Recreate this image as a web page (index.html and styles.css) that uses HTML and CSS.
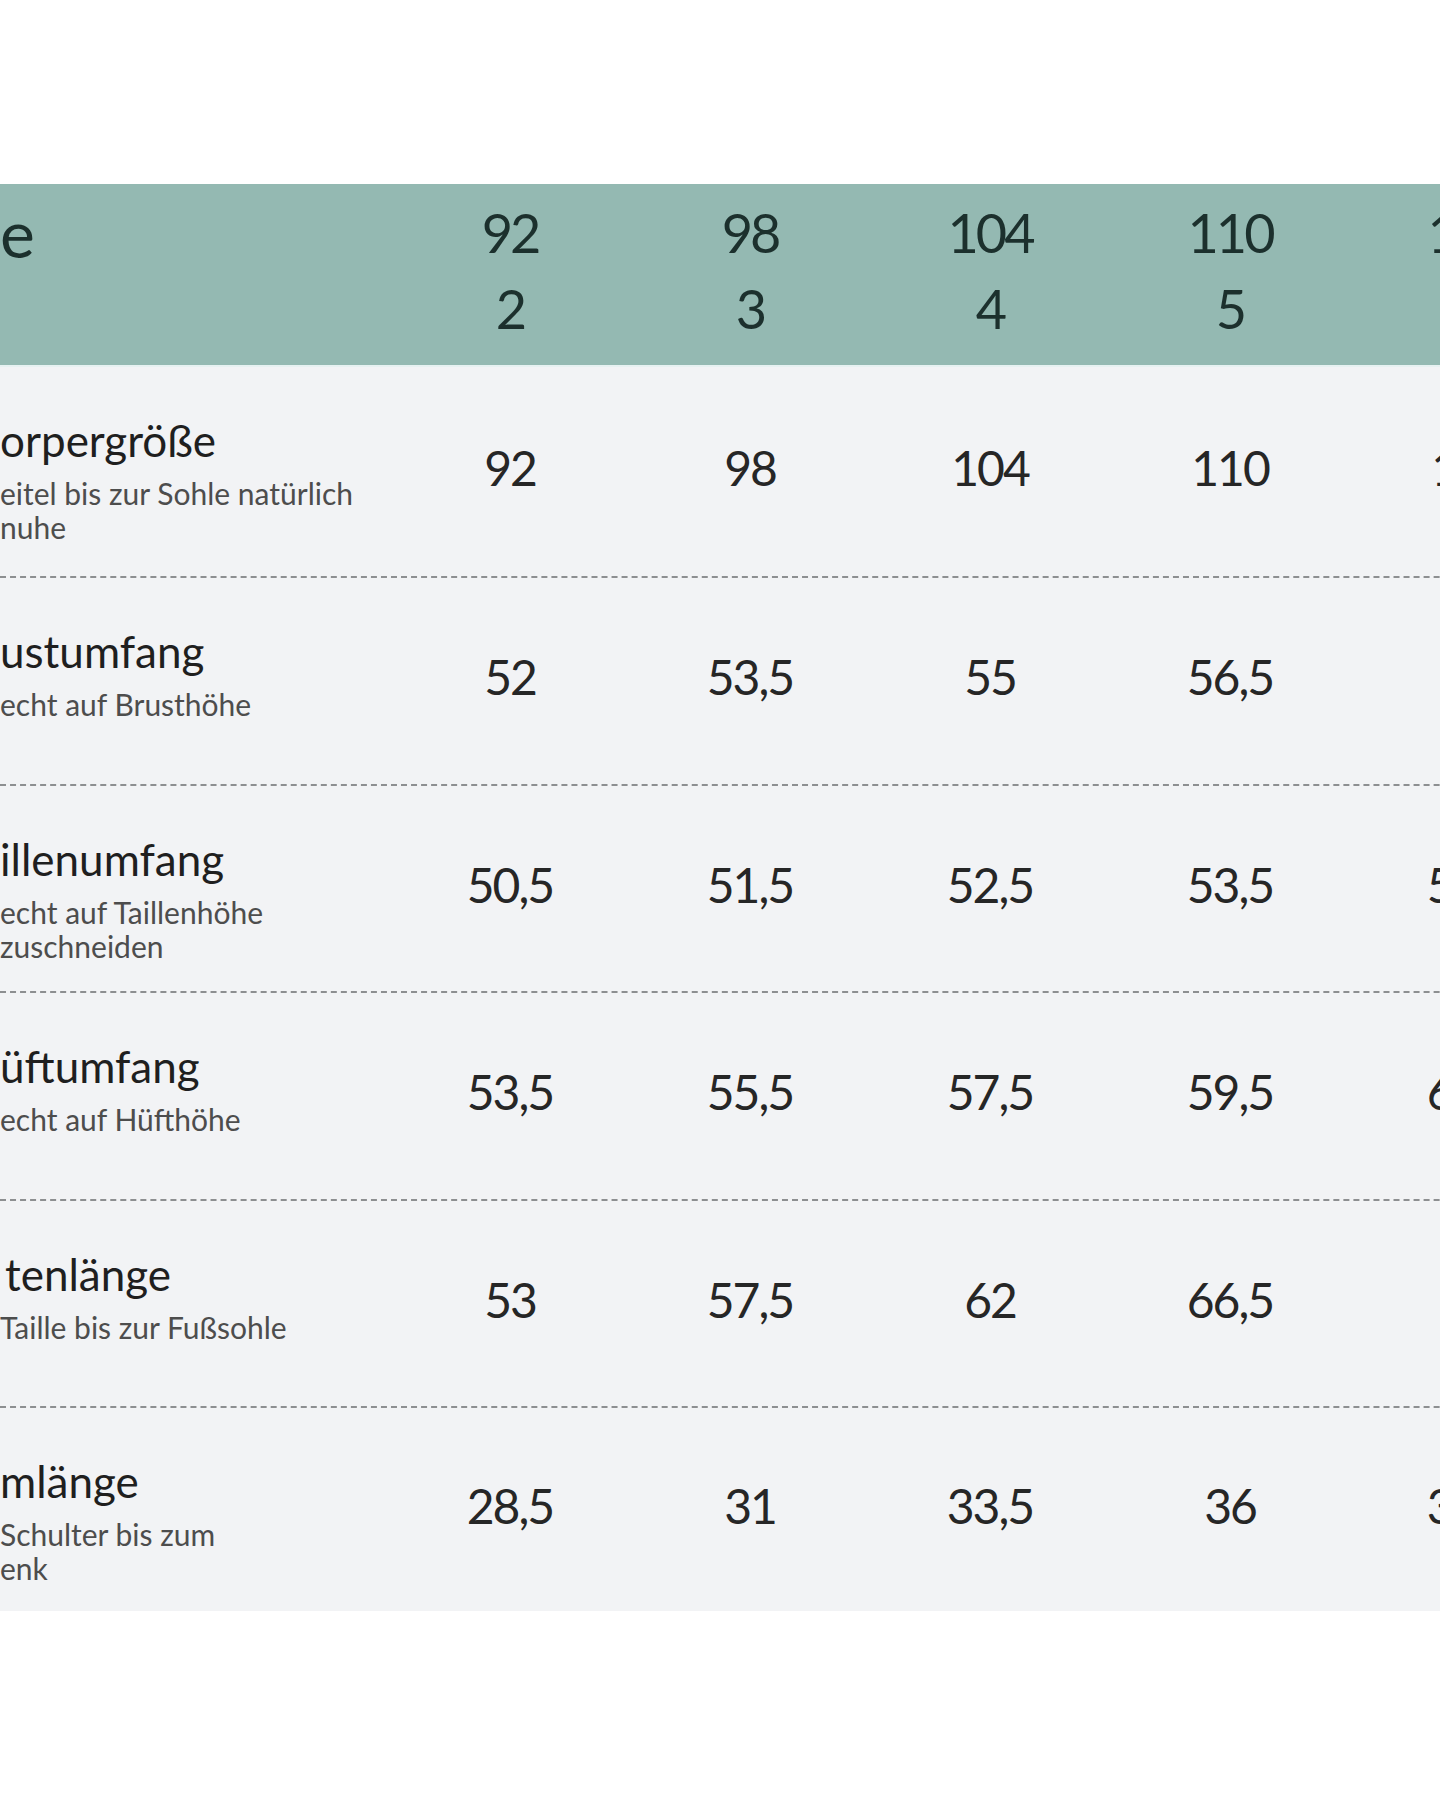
FILE: index.html
```html
<!DOCTYPE html>
<html lang="de">
<head>
<meta charset="utf-8">
<title>Größentabelle</title>
<link rel="stylesheet" href="styles.css">
</head>
<body>
<main class="sheet">
  <section class="chart">
    <div class="head">
      <div class="head-label"><span>e</span><span>&nbsp;</span></div>
      <div class="head-cell"><span>92</span><span>2</span></div>
      <div class="head-cell"><span>98</span><span>3</span></div>
      <div class="head-cell"><span>104</span><span>4</span></div>
      <div class="head-cell"><span>110</span><span>5</span></div>
      <div class="head-cell"><span>116</span><span>6</span></div>
    </div>

    <div class="row">
      <div class="label"><div class="title">orpergröße</div><div class="desc">eitel bis zur Sohle natürlich<br>nuhe</div></div>
      <div class="val">92</div><div class="val">98</div><div class="val">104</div><div class="val">110</div><div class="val">116</div>
    </div>
    <div class="row">
      <div class="label"><div class="title">ustumfang</div><div class="desc">echt auf Brusthöhe</div></div>
      <div class="val">52</div><div class="val">53,5</div><div class="val">55</div><div class="val">56,5</div><div class="val">58</div>
    </div>
    <div class="row">
      <div class="label"><div class="title">illenumfang</div><div class="desc">echt auf Taillenhöhe<br>zuschneiden</div></div>
      <div class="val">50,5</div><div class="val">51,5</div><div class="val">52,5</div><div class="val">53,5</div><div class="val">54,5</div>
    </div>
    <div class="row">
      <div class="label"><div class="title">üftumfang</div><div class="desc">echt auf Hüfthöhe</div></div>
      <div class="val">53,5</div><div class="val">55,5</div><div class="val">57,5</div><div class="val">59,5</div><div class="val">61,5</div>
    </div>
    <div class="row">
      <div class="label"><div class="title indent">tenlänge</div><div class="desc">Taille bis zur Fußsohle</div></div>
      <div class="val">53</div><div class="val">57,5</div><div class="val">62</div><div class="val">66,5</div><div class="val">71</div>
    </div>
    <div class="row">
      <div class="label"><div class="title">mlänge</div><div class="desc">Schulter bis zum<br>enk</div></div>
      <div class="val">28,5</div><div class="val">31</div><div class="val">33,5</div><div class="val">36</div><div class="val">38,5</div>
    </div>
  </section>
</main>
</body>
</html>
```
FILE: styles.css
```css
html, body {
  margin: 0;
  padding: 0;
  background: #ffffff;
}

body {
  overflow: hidden;
  font-family: Lato, "Open Sans", "Liberation Sans", sans-serif;
}

.sheet {
  width: 1440px;
  height: 1800px;
  overflow: hidden;
  padding-top: 184px;
  box-sizing: border-box;
}

.chart {
  width: 1590px;
}

.head,
.row {
  display: grid;
  grid-template-columns: 390px repeat(5, 240px);
}

.head {
  background: #94b9b2;
  height: 183px;
  box-sizing: border-box;
  padding: 11px 0 20px;
  color: #1c302d;
  border-bottom: 2px solid #e6f1f1;
}

.head-label,
.head-cell {
  display: flex;
  flex-direction: column;
  font-size: 54px;
  line-height: 76px;
  letter-spacing: -3px;
}

.head-label {
  font-size: 66px;
  letter-spacing: 0;
}

.head-cell {
  align-items: center;
}

.row {
  background: #f2f3f5;
  height: 207.6px;
  box-sizing: border-box;
  border-top: 2px dashed #8d8f91;
}

.row:nth-child(2) {
  border-top: none;
  height: 209px;
}

.row:last-child {
  height: 205px;
}

.label {
  padding-top: 48px;
  color: #1f1f1f;
}

.title {
  font-size: 44px;
  line-height: 50px;
  white-space: nowrap;
}

.title.indent {
  padding-left: 5px;
}

.desc {
  margin-top: 11px;
  font-size: 30px;
  line-height: 34px;
  color: #4d4d4d;
  white-space: nowrap;
}

.val {
  display: flex;
  align-items: center;
  justify-content: center;
  padding-bottom: 8px;
  font-size: 48px;
  letter-spacing: -2px;
  color: #262626;
}
```
